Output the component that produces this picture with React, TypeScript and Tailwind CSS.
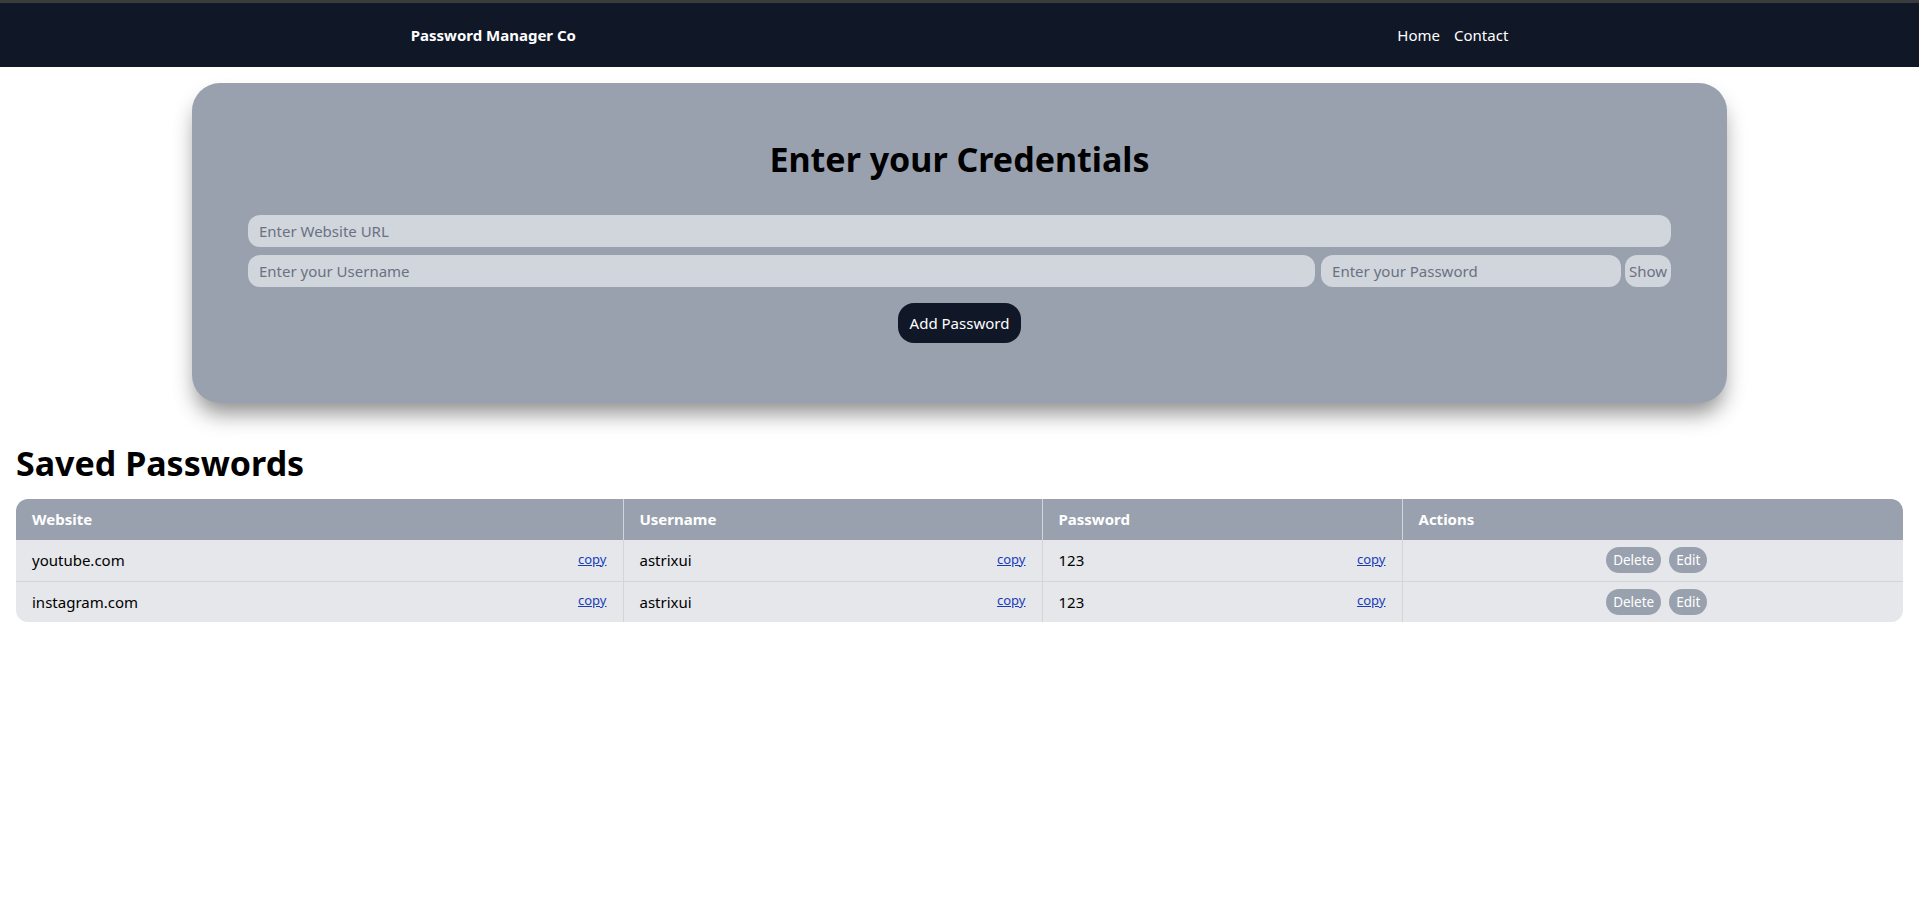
import { useState } from "react";

type Entry = {
  site: string;
  username: string;
  password: string;
};

const entries: Entry[] = [
  { site: "youtube.com", username: "astrixui", password: "123" },
  { site: "instagram.com", username: "astrixui", password: "123" },
];

function CopyCell({ text }: { text: string }) {
  return (
    <td className="h-[41px] px-4 py-0 border-r border-gray-300">
      <div className="flex items-center justify-between">
        <span>{text}</span>
        <button className="-mt-0.5 text-[13px] text-blue-800 underline cursor-pointer">
          copy
        </button>
      </div>
    </td>
  );
}

export default function App() {
  const [site, setSite] = useState("");
  const [username, setUsername] = useState("");
  const [password, setPassword] = useState("");
  const [show, setShow] = useState(false);

  return (
    <div
      className="min-h-screen bg-white text-black"
      style={{ fontFamily: '"Noto Sans", "Open Sans", sans-serif' }}
    >
      {/* NAVBAR */}
      <nav className="h-[67px] border-t-[3px] border-[#3a3b3d] bg-gray-900 text-white flex items-center justify-around">
        <div className="font-bold text-[15px]">Password Manager Co</div>
        <ul className="flex gap-[14px] text-[15px]">
          <li>Home</li>
          <li>Contact</li>
        </ul>
      </nav>

      {/* FORM CARD */}
      <div className="mt-4 mx-auto w-4/5 bg-gray-400 rounded-[28px] shadow-[0_14px_22px_-4px_rgba(0,0,0,0.45)] pt-[56px] pb-[60px] px-14">
        <h1 className="text-[34px] leading-10 font-bold text-center">Enter your Credentials</h1>

        <div className="mt-9 flex flex-col gap-2">
          <input
            value={site}
            onChange={(e) => setSite(e.target.value)}
            placeholder="Enter Website URL"
            className="h-8 w-full rounded-xl bg-gray-300 px-[11px] text-[15px] outline-none placeholder:text-gray-500"
          />
          <div className="flex">
            <input
              value={username}
              onChange={(e) => setUsername(e.target.value)}
              placeholder="Enter your Username"
              className="h-8 flex-1 rounded-xl bg-gray-300 px-[11px] text-[15px] outline-none placeholder:text-gray-500"
            />
            <input
              type={show ? "text" : "password"}
              value={password}
              onChange={(e) => setPassword(e.target.value)}
              placeholder="Enter your Password"
              className="ml-1.5 h-8 w-[300px] rounded-xl bg-gray-300 px-[11px] text-[15px] outline-none placeholder:text-gray-500"
            />
            <button
              onClick={() => setShow(!show)}
              className="ml-1 h-8 w-[46px] rounded-xl bg-gray-300 text-[15px] text-gray-500"
            >
              Show
            </button>
          </div>
        </div>

        <div className="mt-4 flex justify-center">
          <button className="h-10 rounded-2xl bg-gray-900 px-3 text-[15px] text-white">
            Add Password
          </button>
        </div>
      </div>

      {/* SAVED PASSWORDS */}
      <div className="px-4 mt-10">
        <h2 className="text-[34px] leading-10 font-bold">Saved Passwords</h2>

        <div className="mt-4 rounded-xl overflow-hidden">
          <table className="w-full table-fixed border-collapse text-left text-[15px]">
            <colgroup>
              <col className="w-[607px]" />
              <col className="w-[419px]" />
              <col className="w-[360px]" />
              <col />
            </colgroup>
            <thead className="bg-gray-400 text-white">
              <tr>
                <th className="h-[41px] px-4 py-0 font-bold border-r border-gray-300">Website</th>
                <th className="h-[41px] px-4 py-0 font-bold border-r border-gray-300">Username</th>
                <th className="h-[41px] px-4 py-0 font-bold border-r border-gray-300">Password</th>
                <th className="h-[41px] px-4 py-0 font-bold">Actions</th>
              </tr>
            </thead>
            <tbody className="bg-gray-200">
              {entries.map((item, i) => (
                <tr
                  key={item.site}
                  className={i === 0 ? "border-b border-gray-300" : ""}
                >
                  <CopyCell text={item.site} />
                  <CopyCell text={item.username} />
                  <CopyCell text={item.password} />
                  <td className="h-[41px] px-4 py-0">
                    <div className="flex justify-center gap-2 pl-2">
                      <button className="rounded-full bg-gray-400 px-[7px] py-[3px] text-[13.5px] text-white">
                        Delete
                      </button>
                      <button className="rounded-full bg-gray-400 px-[7px] py-[3px] text-[13.5px] text-white">
                        Edit
                      </button>
                    </div>
                  </td>
                </tr>
              ))}
            </tbody>
          </table>
        </div>
      </div>
    </div>
  );
}
